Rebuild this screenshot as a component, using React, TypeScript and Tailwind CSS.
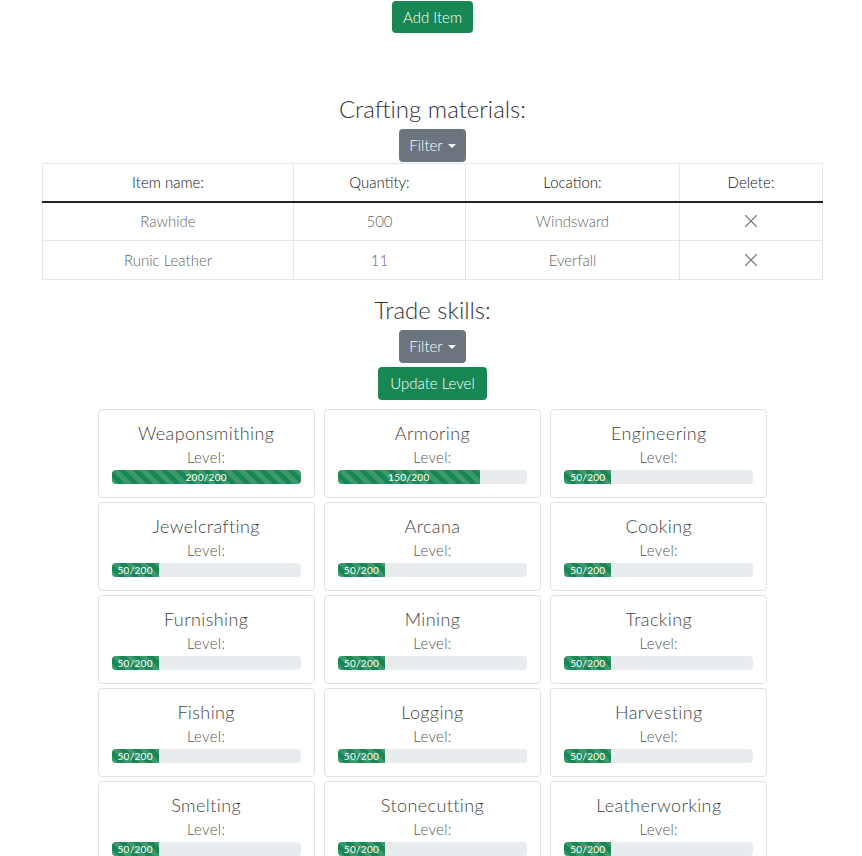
import { X } from "lucide-react";

const materials = [
  { name: "Rawhide", qty: 500, location: "Windsward" },
  { name: "Runic Leather", qty: 11, location: "Everfall" },
];

const skills = [
  { name: "Weaponsmithing", level: 200 },
  { name: "Armoring", level: 150 },
  { name: "Engineering", level: 50 },
  { name: "Jewelcrafting", level: 50 },
  { name: "Arcana", level: 50 },
  { name: "Cooking", level: 50 },
  { name: "Furnishing", level: 50 },
  { name: "Mining", level: 50 },
  { name: "Tracking", level: 50 },
  { name: "Fishing", level: 50 },
  { name: "Logging", level: 50 },
  { name: "Harvesting", level: 50 },
  { name: "Smelting", level: 50 },
  { name: "Stonecutting", level: 50 },
  { name: "Leatherworking", level: 50 },
];

const MAX = 200;

function FilterButton() {
  return (
    <button className="flex h-[33px] w-[67px] items-center justify-center gap-[5px] rounded-[4px] bg-[#6c757d] text-[15px] text-white">
      Filter
      <span className="mt-[1px] h-0 w-0 border-x-[4px] border-t-[4px] border-x-transparent border-t-white"></span>
    </button>
  );
}

function SkillCard({ name, level }: { name: string; level: number }) {
  const pct = (level / MAX) * 100;
  return (
    <div className="flex h-[89px] flex-col items-center rounded-[4px] border border-[#e2e2e2] px-[13px] pt-[12px]">
      <div className="text-[18px] leading-[23px] tracking-[0.4px] text-[#444]">{name}</div>
      <div className="mt-[2px] text-[15px] leading-[20px] tracking-[0.3px] text-[#555]">Level:</div>
      <div className="mt-[3px] flex h-[14px] w-full overflow-hidden rounded-[4px] bg-[#e9ecef]">
        <div
          className="flex items-center justify-center bg-[#198754] bg-[linear-gradient(45deg,rgba(255,255,255,.15)_25%,transparent_25%,transparent_50%,rgba(255,255,255,.15)_50%,rgba(255,255,255,.15)_75%,transparent_75%,transparent)] bg-[length:14px_14px] text-[10px] font-normal leading-none tracking-[0.3px] text-white"
          style={{ width: `${pct}%` }}
        >
          {level}/{MAX}
        </div>
      </div>
    </div>
  );
}

export default function App() {
  return (
    <div className="flex min-h-screen flex-col items-center bg-white pl-[3px] font-['Lato',sans-serif] font-light text-[#333]">
      <button className="mt-[1px] h-[32px] w-[81px] rounded-[4px] bg-[#198754] text-[15px] text-white">
        Add Item
      </button>

      <h2 className="mt-[61px] text-[24px] leading-[29px] text-[#333]">Crafting materials:</h2>
      <div className="mt-[6px]">
        <FilterButton />
      </div>

      <table className="mt-[1px] w-[781px] border-collapse border border-[#e6e6e6] text-center text-[15px]">
        <thead>
          <tr className="h-[38px] border-b-2 border-[#222]">
            <th className="w-[251px] border-r border-[#e6e6e6] font-light text-[#111]">Item name:</th>
            <th className="w-[172px] border-r border-[#e6e6e6] font-light text-[#111]">Quantity:</th>
            <th className="w-[214px] border-r border-[#e6e6e6] font-light text-[#111]">Location:</th>
            <th className="font-light text-[#111]">Delete:</th>
          </tr>
        </thead>
        <tbody>
          {materials.map((m) => (
            <tr key={m.name} className="h-[39px] border-b border-[#e6e6e6] text-[#666]">
              <td className="border-r border-[#e6e6e6]">{m.name}</td>
              <td className="border-r border-[#e6e6e6]">{m.qty}</td>
              <td className="border-r border-[#e6e6e6]">{m.location}</td>
              <td>
                <X className="mx-auto h-[22px] w-[22px] text-[#777]" strokeWidth={1.2} />
              </td>
            </tr>
          ))}
        </tbody>
      </table>

      <h2 className="mt-[15px] text-[24px] leading-[29px] text-[#333]">Trade skills:</h2>
      <div className="mt-[6px]">
        <FilterButton />
      </div>
      <button className="mt-[4px] h-[33px] w-[109px] rounded-[4px] bg-[#198754] text-[15px] text-white">
        Update Level
      </button>

      <div className="mt-[9px] grid w-[670px] grid-cols-3 gap-x-[9px] gap-y-[4px]">
        {skills.map((s) => (
          <SkillCard key={s.name} name={s.name} level={s.level} />
        ))}
      </div>
    </div>
  );
}
